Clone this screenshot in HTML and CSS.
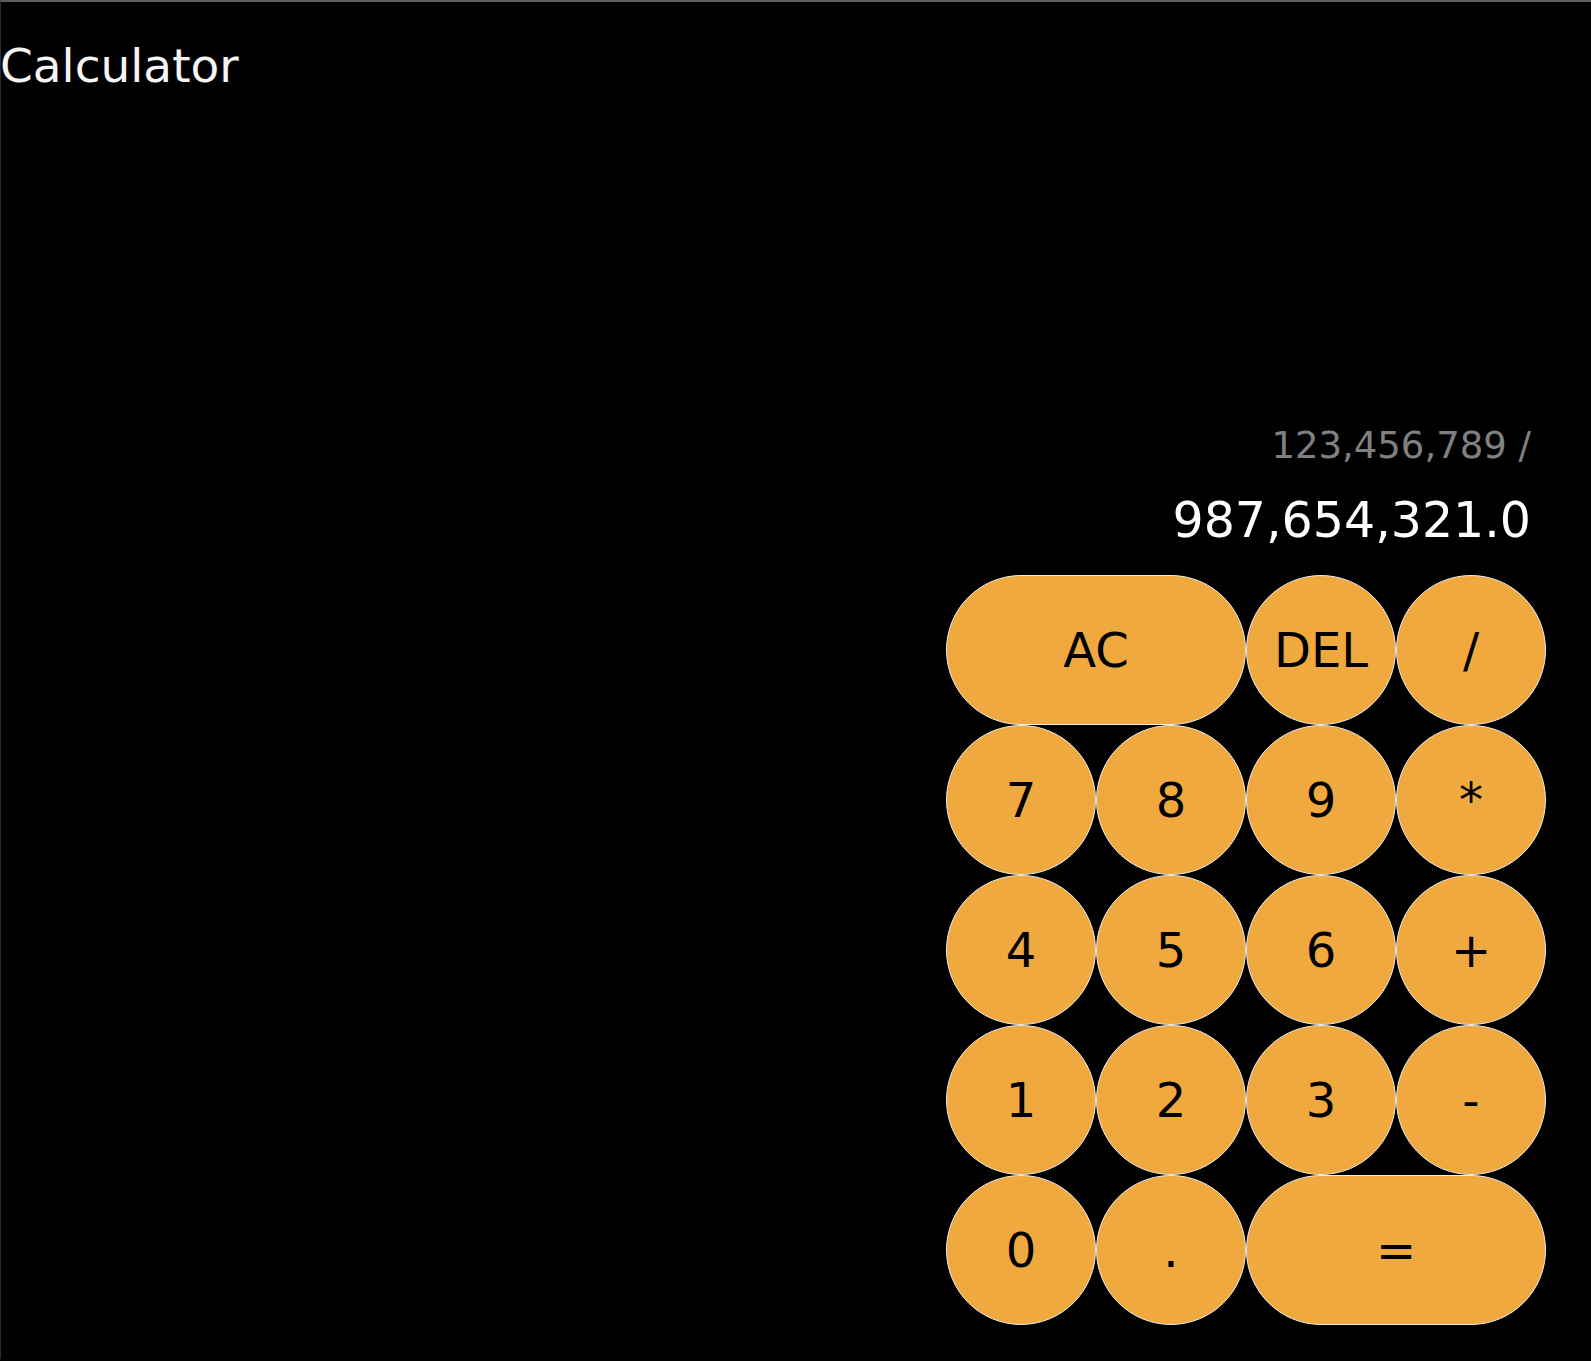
FILE: index.html
```html
<!DOCTYPE html>
<html lang="en">
<head>
<meta charset="utf-8">
<title>Calculator</title>
<link rel="stylesheet" href="styles.css">
</head>
<body>
<h1 class="title">Calculator</h1>
<main class="calc">
  <div class="display">
    <div class="prev">123,456,789 /</div>
    <div class="cur">987,654,321.0</div>
  </div>
  <div class="keypad">
    <button class="key wide">AC</button>
    <button class="key">DEL</button>
    <button class="key">/</button>
    <button class="key">7</button>
    <button class="key">8</button>
    <button class="key">9</button>
    <button class="key">*</button>
    <button class="key">4</button>
    <button class="key">5</button>
    <button class="key">6</button>
    <button class="key">+</button>
    <button class="key">1</button>
    <button class="key">2</button>
    <button class="key">3</button>
    <button class="key">-</button>
    <button class="key">0</button>
    <button class="key">.</button>
    <button class="key wide">=</button>
  </div>
</main>
</body>
</html>
```
FILE: styles.css
```css
html, body {
  margin: 0;
  padding: 0;
  background: #000;
}
body {
  min-height: 1359px;
  border-top: 2px solid #5d5d63;
  border-left: 1px solid #2c2c2c;
  box-sizing: border-box;
  font-family: "DejaVu Sans", Verdana, sans-serif;
  color: #f5f5f5;
}
.title {
  margin: 36px 0 0 -1px;
  font-size: 47px;
  line-height: 56px;
  font-weight: normal;
  color: #f5f5f5;
}
.calc {
  display: flex;
  flex-direction: column;
  align-items: flex-end;
  margin: 331px 45px 0 0;
}
.display {
  display: flex;
  flex-direction: column;
  align-items: flex-end;
  gap: 26px;
  padding-right: 15px;
  margin-bottom: 26px;
}
.prev {
  font-size: 37px;
  line-height: 42px;
  color: #808080;
}
.cur {
  font-size: 49px;
  line-height: 56px;
  color: #fff;
}
.keypad {
  display: grid;
  grid-template-columns: repeat(4, 150px);
  grid-auto-rows: 150px;
}
.key {
  margin: 0;
  padding: 0;
  width: 100%;
  height: 100%;
  box-sizing: border-box;
  border: 1px solid #ececec;
  border-radius: 75px;
  background: #f0a93e;
  color: #000;
  font-family: "DejaVu Sans", Verdana, sans-serif;
  font-size: 48px;
  line-height: 1;
  cursor: pointer;
}
.wide {
  grid-column: span 2;
}
```
